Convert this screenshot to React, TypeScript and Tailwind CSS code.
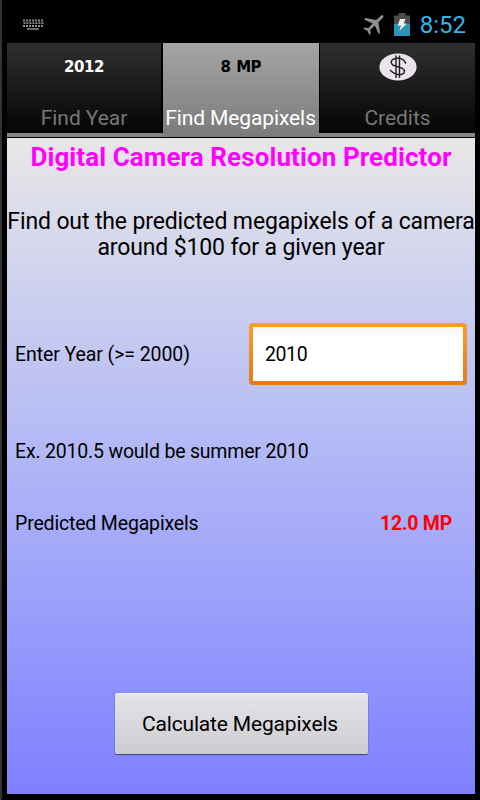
import React, { useState } from 'react';

const KeyboardIcon: React.FC = () => (
    <svg width="22" height="12" viewBox="0 0 22 12" fill="none" stroke="#8c8c8c">
        <path d="M1 1.5h21" strokeWidth="1.8" strokeDasharray="2 1" />
        <path d="M1.5 4.2h20M1 7h21" strokeWidth="1.8" strokeDasharray="2 1" />
        <path d="M5 10h12" strokeWidth="1.5" />
    </svg>
);

const PlaneIcon: React.FC = () => (
    <svg width="22" height="20" viewBox="0 0 22 20" fill="#8f8f8f">
        <path d="M20.3 .6c-1.3-.7-2.4.2-3.4 1.1l-3.6 3.2L2.3 3 1 4.5l8.7 4-4.4 4.7-3.9-.7L.3 13.7l4 2.1L6.5 20l1.3-1.2-.7-3.9 4.8-4.3 3.7 8.3 1.5-1.4-1.7-10.3 3.6-3.5c1-1 1.9-2.1 1.3-3.1z" />
    </svg>
);

const BatteryIcon: React.FC = () => (
    <svg width="16" height="23" viewBox="0 0 16 23">
        <path d="M4.5 0h7v2.5H16V23H0V2.5h4.5z" fill="#4c4c4c" />
        <path d="M0 11h16v12H0z" fill="#2b93b5" />
        <path d="M6 6h5.5L9.7 10.5h3.1L5.2 18l2-5.5H3.7z" fill="#f3f3f3" />
    </svg>
);

const DollarIcon: React.FC = () => (
    <svg width="38" height="28" viewBox="0 0 38 28" fill="none">
        <ellipse cx="19" cy="14" rx="18.6" ry="13.6" fill="#eae4ea" />
        <path
            d="M27 10.5l-2-3-3.5-2-4-.5-4 1.5-1.5 2.500 1.500 3 4.500 1.500 5 1.500 2.500 2.500-.5 2.500-2.500 1.500h-4l-4-1.500-3.500-3M17 2.500v22.500M20.500 2.500v22.500"
            stroke="#201b22"
            strokeWidth="1.4"
        />
    </svg>
);

const Tab: React.FC<{ label: string; active?: boolean; onClick: () => void; children: React.ReactNode }> = ({ label, active, onClick, children }) => (
    <button
        onClick={onClick}
        className={`flex flex-col items-center justify-between pt-2.5 ${
            active
                ? 'bg-linear-to-b from-[#a5a5a5] to-[#7b7b7b] text-white'
                : 'mb-1 bg-linear-to-b from-[#303030] via-[#191a19] to-[#060606] text-[#777777]'
        }`}
    >
        <span className="flex h-7 items-center justify-center">{children}</span>
        <span className={`text-[21px] leading-[30px] whitespace-nowrap ${active ? 'mb-1 tracking-[-0.1px]' : 'tracking-[-0.05px]'}`}>{label}</span>
    </button>
);

const App: React.FC = () => {
    const [tab, setTab] = useState('megapixels');
    const [year, setYear] = useState('2010');
    const [result, setResult] = useState('12.0 MP');

    const handleCalculate = () => {
        const value = Number(year);
        if (value >= 2000) {
            setResult(`${(12 + (value - 2010) * 1.2).toFixed(1)} MP`);
        }
    };

    return (
        <div className="flex h-[800px] w-[480px] flex-col overflow-hidden border-l-2 border-[#343434] bg-black pr-[5px] pb-1.5 pl-[5px] font-[Roboto,sans-serif] text-black">
            <header className="flex h-[43px] shrink-0 items-start justify-between pr-[9px] pl-[15px]">
                <div className="pt-[19px]">
                    <KeyboardIcon />
                </div>
                <div className="flex items-start">
                    <div className="pt-[15px]">
                        <PlaneIcon />
                    </div>
                    <div className="ml-[9px] pt-[13px]">
                        <BatteryIcon />
                    </div>
                    <span className="ml-2.5 pt-2.5 text-[24px] leading-[30px] text-[#33b5e5]">8:52</span>
                </div>
            </header>

            <nav className="grid h-[95px] shrink-0 grid-cols-[154px_156px_155px] gap-x-[1.5px] border-b border-black bg-[linear-gradient(to_bottom,#000_0_90px,#858585_90px)]">
                <Tab label="Find Year" active={tab === 'year'} onClick={() => setTab('year')}>
                    <span className="font-['DejaVu_Sans',sans-serif] text-[15px] font-bold tracking-[-0.4px] text-white">2012</span>
                </Tab>
                <Tab label="Find Megapixels" active={tab === 'megapixels'} onClick={() => setTab('megapixels')}>
                    <span className="font-['DejaVu_Sans',sans-serif] text-[15px] font-bold tracking-[-0.9px] text-black [word-spacing:2px]">8 MP</span>
                </Tab>
                <Tab label="Credits" active={tab === 'credits'} onClick={() => setTab('credits')}>
                    <DollarIcon />
                </Tab>
            </nav>

            <main className="flex flex-1 flex-col items-center bg-linear-to-b from-[#e8e7e6] to-[#7f7fff]">
                <h1 className="mt-1 text-[26px] leading-[31px] font-bold tracking-[0.09px] whitespace-nowrap text-[#ff00ff]">Digital Camera Resolution Predictor</h1>
                <p className="mt-9 text-center text-[23px] leading-[26px] tracking-[-0.13px] whitespace-nowrap">
                    Find out the predicted megapixels of a camera
                    <br />
                    around $100 for a given year
                </p>
                <div className="mt-[62px] flex h-[62px] w-full items-center justify-between pr-2 pl-2 text-[19.5px] tracking-[-0.08px]">
                    <label htmlFor="year" className="pt-0.5">Enter Year (&gt;= 2000)</label>
                    <div className="h-[62px] w-[218px] rounded-[4px] bg-linear-to-b from-[#f69d31] to-[#e8791a] p-1">
                        <input
                            id="year"
                            value={year}
                            onChange={(e) => setYear(e.target.value)}
                            className="h-full w-full bg-linear-to-b from-[#f5f5f7] via-white via-20% to-white px-3 text-[19.5px] tracking-[-0.4px] outline-none"
                        />
                    </div>
                </div>
                <p className="mt-[54px] w-full pl-2 text-[19.5px] leading-[26px] tracking-[-0.19px]">Ex. 2010.5 would be summer 2010</p>
                <div className="mt-[46px] flex w-full justify-between pr-[23px] pl-2 text-[19.5px] leading-[26px] tracking-[-0.17px]">
                    <span>Predicted Megapixels</span>
                    <span className="font-bold tracking-[-0.25px] text-[#ff0000]">{result}</span>
                </div>
                <button
                    onClick={handleCalculate}
                    className="mt-[156px] h-[61px] w-[253px] rounded-[2px] border-t border-[#f3f3f5] bg-linear-to-b from-[#e4e4e8] to-[#ccccd1] pt-0.5 pr-0.5 text-[21px] tracking-[-0.17px] shadow-[0_1px_1px_#44446a,0_0_1px_#55557a]"
                >
                    Calculate Megapixels
                </button>
            </main>
        </div>
    );
};

export default App;
